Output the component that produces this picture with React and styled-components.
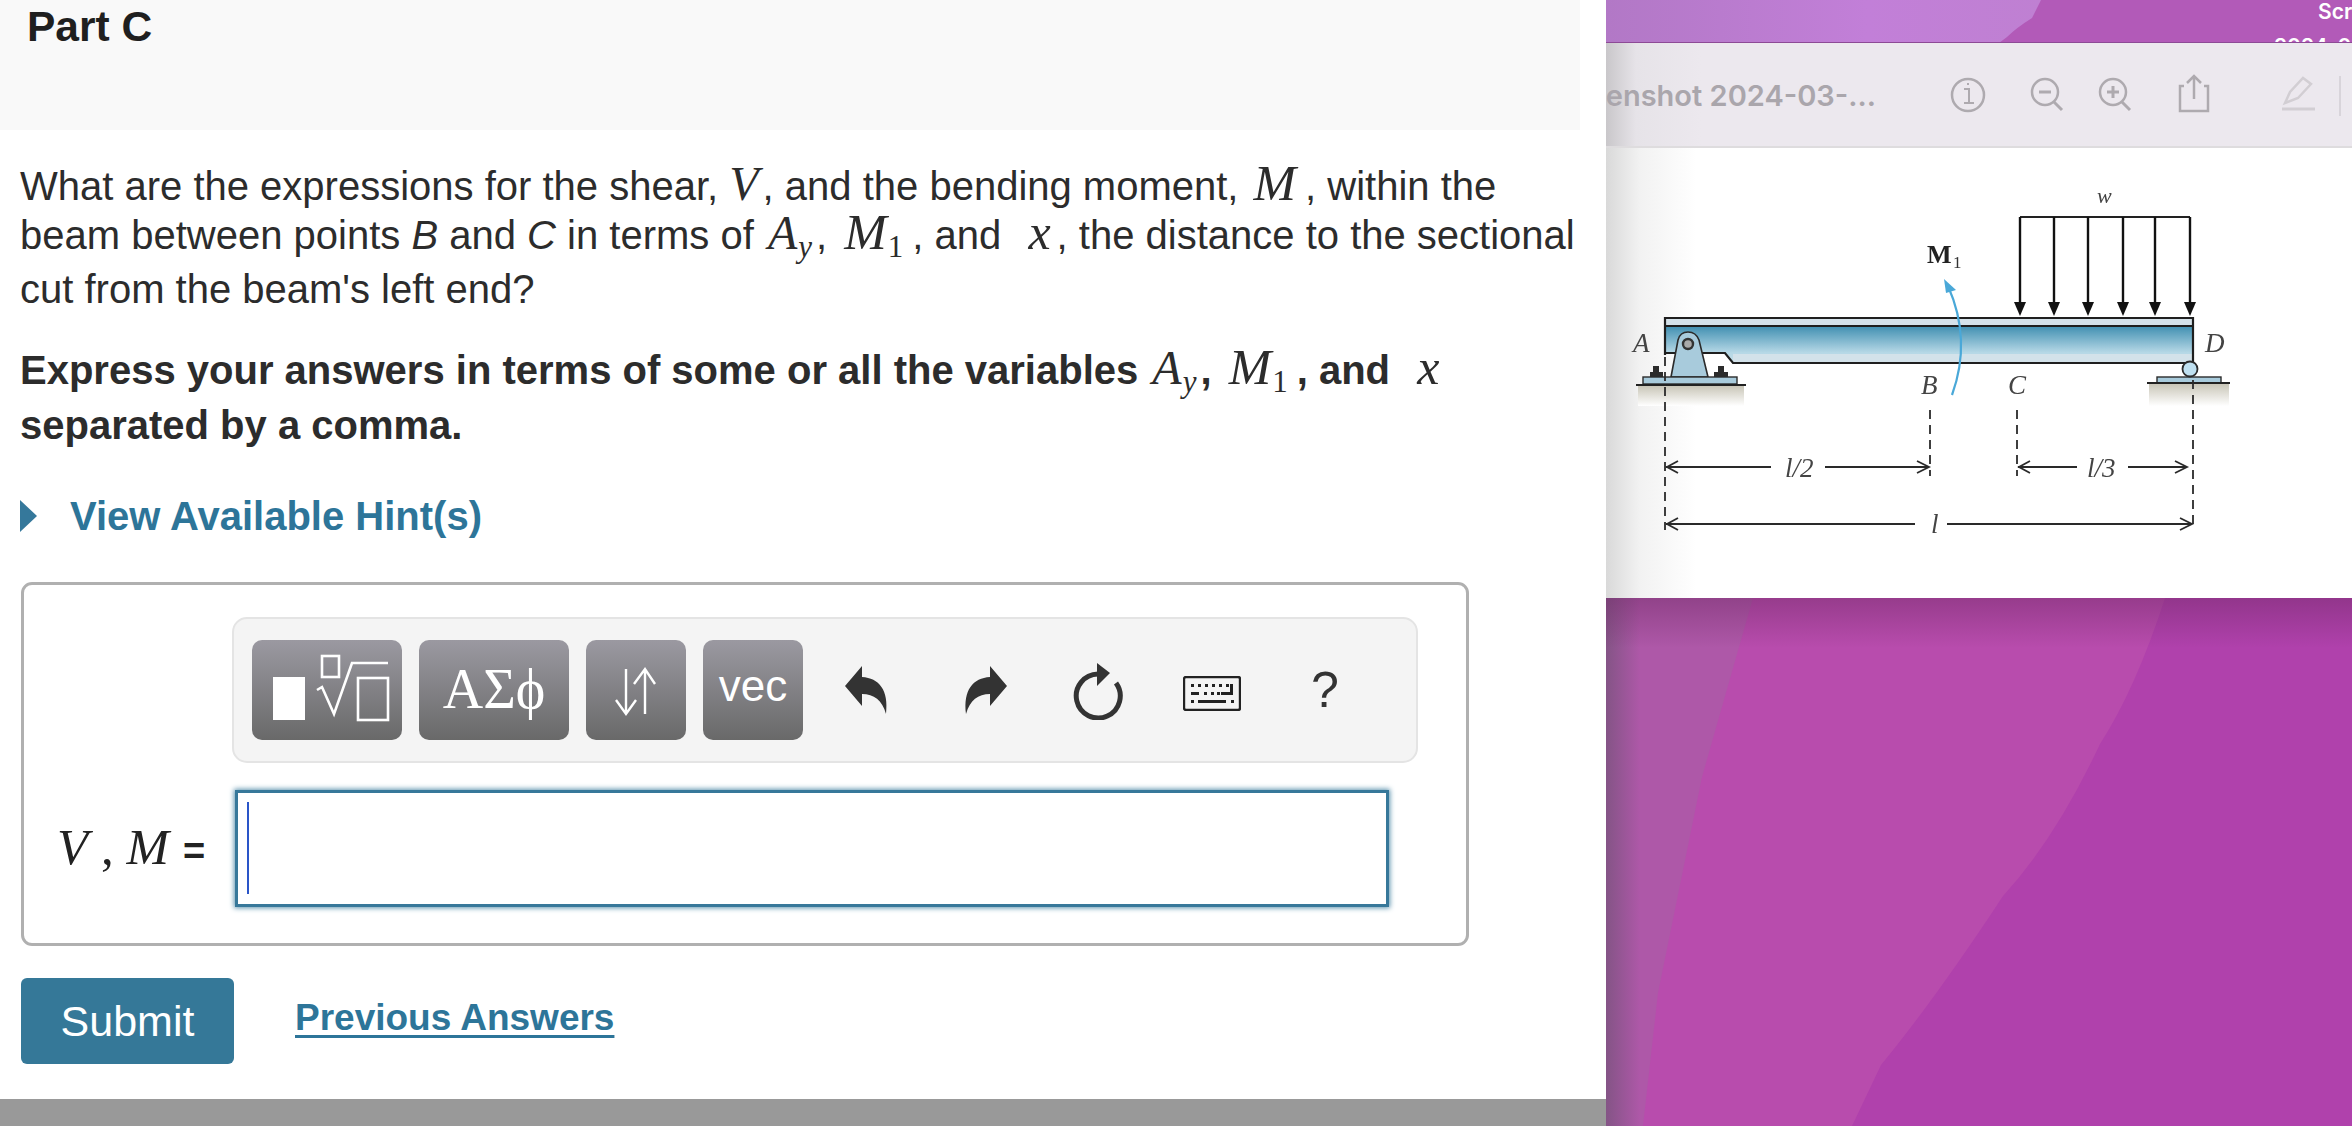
import React from 'react';
import styled, { createGlobalStyle } from 'styled-components';

const GlobalStyle = createGlobalStyle`
  html, body {
    margin: 0;
    padding: 0;
    background: #fff;
    overflow: hidden;
  }
`;

const Page = styled.div`
  display: flex;
  width: 2352px;
  height: 1126px;
  overflow: hidden;
  font-family: "Liberation Sans", Arial, sans-serif;
  color: #2c2c2c;
`;

/* left column: the homework page */
const Question = styled.div`
  width: 1606px;
  height: 1126px;
  display: flex;
  flex-direction: column;
  background: #fff;
`;

const PartHeader = styled.div`
  width: 1580px;
  height: 130px;
  box-sizing: border-box;
  padding: 0 0 0 27px;
  background: #f9f9f9;
`;

const PartTitle = styled.h2`
  margin: 0;
  font-size: 42.5px;
  line-height: 54px;
  font-weight: 700;
  color: #1f1f1f;
`;

const Body = styled.div`
  flex: 1;
  padding: 0 0 0 20px;
`;

const Line = styled.div`
  height: ${(p) => p.$h}px;
  line-height: ${(p) => p.$h}px;
  margin-top: ${(p) => p.$top || 0}px;
  font-size: 40px;
  font-weight: ${(p) => (p.$bold ? 700 : 400)};
  white-space: nowrap;
`;

const Math = styled.span`
  font-family: "Liberation Serif", "Times New Roman", serif;
  font-style: italic;
  font-weight: 400;
  font-size: ${(p) => p.$size || 48}px;
  line-height: 0;
  margin: 0 ${(p) => p.$right ?? 3}px 0 ${(p) => p.$left ?? 3}px;
  letter-spacing: 1px;
  sub {
    font-size: 31px;
    line-height: 0;
    vertical-align: -8px;
  }
  b {
    font-style: normal;
    font-weight: 400;
  }
`;

const Ital = styled.i`
  font-style: italic;
`;

const HintRow = styled.div`
  display: flex;
  align-items: center;
  gap: 33px;
  margin-top: 43px;
  height: 40px;
`;

const HintArrow = styled.span`
  width: 0;
  height: 0;
  border-left: 17px solid #35789b;
  border-top: 16px solid transparent;
  border-bottom: 16px solid transparent;
`;

const HintLink = styled.span`
  font-size: 40px;
  font-weight: 700;
  color: #2d7599;
`;

const AnswerBox = styled.div`
  box-sizing: border-box;
  width: 1448px;
  height: 364px;
  margin: 46px 0 0 1px;
  padding: 32px 0 0 0;
  border: 3px solid #b0b0b0;
  border-radius: 11px;
`;

const Toolbar = styled.div`
  box-sizing: border-box;
  width: 1186px;
  height: 146px;
  margin-left: 208px;
  padding: 21px 0 0 18px;
  display: flex;
  gap: 17px;
  background: #f4f4f4;
  border: 2px solid #e4e4e4;
  border-radius: 15px;
`;

const MathButton = styled.div`
  width: ${(p) => p.$w}px;
  height: 100px;
  flex: none;
  display: flex;
  align-items: center;
  justify-content: center;
  box-sizing: border-box;
  padding-bottom: ${(p) => (p.$serif ? 2 : p.$text ? 8 : 0)}px;
  border-radius: 10px;
  background: linear-gradient(#9b99a1, #696969);
  color: #fff;
  font-family: ${(p) => (p.$serif ? '"Liberation Serif", serif' : '"Liberation Sans", sans-serif')};
  font-size: ${(p) => (p.$serif ? 56 : 44)}px;
  svg {
    display: block;
  }
`;

const Tools = styled.div`
  display: flex;
  align-items: center;
  height: 100px;
  margin-left: 25px;
`;

const ToolSlot = styled.div`
  width: ${(p) => p.$w}px;
  flex: none;
  display: flex;
  align-items: center;
  padding-top: ${(p) => p.$down || 0}px;
  svg {
    display: block;
  }
`;

const Help = styled.span`
  font-size: 50px;
  color: #333;
`;

const InputRow = styled.div`
  display: flex;
  align-items: center;
  margin-top: 27px;
`;

const InputLabel = styled.div`
  width: 211px;
  box-sizing: border-box;
  padding: 0 0 4px 33px;
  font-family: "Liberation Serif", serif;
  font-size: 51px;
  white-space: nowrap;
  color: #222;
  i {
    font-style: italic;
  }
  span {
    font-family: "Liberation Sans", sans-serif;
    font-size: 38px;
    font-weight: 700;
    margin-left: 14px;
  }
`;

const MathInput = styled.div`
  box-sizing: border-box;
  width: 1154px;
  height: 117px;
  padding: 9px 0 0 9px;
  background: #fff;
  border: 3px solid #37789a;
  box-shadow: 0 0 5px 1px #5d93ae;
`;

const Caret = styled.div`
  width: 2px;
  height: 92px;
  background: #2a55c8;
`;

const Actions = styled.div`
  display: flex;
  align-items: center;
  gap: 61px;
  margin-top: 32px;
  margin-left: 1px;
`;

const SubmitButton = styled.div`
  width: 213px;
  height: 86px;
  display: flex;
  align-items: center;
  justify-content: center;
  border-radius: 6px;
  background: #357898;
  color: #fff;
  font-size: 43px;
`;

const PrevLink = styled.span`
  font-size: 37px;
  font-weight: 700;
  color: #2d7599;
  text-decoration: underline;
  text-decoration-thickness: 3px;
  text-underline-offset: 5px;
  position: relative;
  top: -3px;
`;

const BottomBar = styled.div`
  height: 27px;
  background: #999;
`;

/* right column: preview window on the desktop */
const Desktop = styled.div`
  position: relative;
  flex: 1;
  display: flex;
  flex-direction: column;
  overflow: hidden;
`;

const TopWall = styled.div`
  position: relative;
  height: 43px;
  overflow: hidden;
  background: #b25ab8;
  border-bottom: 1px solid #8d4a96;
  box-sizing: border-box;
`;

const WallShape = styled.svg`
  position: absolute;
  left: 0;
  top: 0;
`;

const DesktopLabel = styled.div`
  position: absolute;
  left: ${(p) => p.$x}px;
  top: ${(p) => p.$y}px;
  font-family: "Inter", sans-serif;
  font-size: 21px;
  font-weight: 600;
  color: #fff;
  white-space: nowrap;
`;

const WindowBar = styled.div`
  position: relative;
  height: 105px;
  box-sizing: border-box;
  display: flex;
  align-items: center;
  background: linear-gradient(90deg, #c9c7ca 0, #e6e3e8 30px, #ece8ee 95px);
  border-bottom: 2px solid #dedcde;
  overflow: hidden;
`;

const FileName = styled.div`
  width: 270px;
  flex: none;
  display: flex;
  justify-content: flex-end;
  overflow: hidden;
  font-family: "Inter", sans-serif;
  font-size: 29px;
  font-weight: 600;
  color: #aaa6ac;
  white-space: nowrap;
  margin-top: 2px;
`;

const BarIcons = styled.svg`
  position: absolute;
  left: 0;
  top: 0;
`;

const Preview = styled.div`
  height: 450px;
  background: linear-gradient(90deg, #d9d9d9 0, #f2f2f2 34px, #fff 90px);
  svg {
    display: block;
    filter: blur(0.5px);
  }
`;

const Wall = styled.div`
  position: relative;
  flex: 1;
  background: #b041ac;
`;

const WallShade = styled.div`
  position: absolute;
  inset: 0;
  background:
    linear-gradient(180deg, rgba(110, 40, 100, 0.45) 0, rgba(110, 40, 100, 0) 50px),
    linear-gradient(90deg, rgba(90, 80, 100, 0.5) 0, rgba(90, 80, 100, 0) 34px);
`;

const Dim = ({ x1, x2, y }) => (
  <line x1={x1} x2={x2} y1={y} y2={y} stroke="#2a2a2a" strokeWidth="1.8" />
);

const Diagram = () => (
  <svg width="746" height="450" viewBox="1606 148 746 450" fontFamily="'Liberation Serif', serif">
    <defs>
      <linearGradient id="web" x1="0" y1="0" x2="0" y2="1">
        <stop offset="0" stopColor="#408fb1" />
        <stop offset="0.72" stopColor="#b6d8e6" />
        <stop offset="1" stopColor="#c3dde8" />
      </linearGradient>
      <linearGradient id="ground" x1="0" y1="0" x2="0" y2="1">
        <stop offset="0" stopColor="#c9c6b8" />
        <stop offset="1" stopColor="#ffffff" />
      </linearGradient>
    </defs>

    {/* ground shades */}
    <rect x="1638" y="386" width="106" height="20" fill="url(#ground)" />
    <rect x="2149" y="384" width="80" height="22" fill="url(#ground)" />

    {/* beam */}
    <path d="M1665 326H2193V363H1733L1725 353H1665Z" fill="url(#web)" />
    <rect x="1665" y="318" width="528" height="8" fill="#d5e2ea" />
    <rect x="1733" y="354" width="460" height="9" fill="#d3e2ea" />
    <path
      d="M1665 355V318H2193V363H1733L1725 353H1665M1665 326H2193"
      fill="none"
      stroke="#1f1f1f"
      strokeWidth="2.2"
    />

    {/* pin support at A */}
    <path d="M1671 377L1678 340Q1680 332 1688 332Q1696 332 1699 340L1708 377Z" fill="#a8cbdc" stroke="#2b2b2b" strokeWidth="1.6" />
    <circle cx="1688" cy="344" r="5" fill="#a9a9a9" stroke="#333" strokeWidth="2.4" />
    <rect x="1643" y="377" width="94" height="7" fill="#a8cbdc" stroke="#2b2b2b" strokeWidth="1.4" />
    <path d="M1650 377V372H1653V366H1659V372H1663V377Z" fill="#2b2b2b" />
    <path d="M1714 377V372H1718V366H1724V372H1728V377Z" fill="#2b2b2b" />
    <line x1="1636" x2="1746" y1="385" y2="385" stroke="#222" strokeWidth="1.8" />

    {/* roller at D */}
    <rect x="2157" y="377" width="64" height="6" fill="#a8cbdc" stroke="#2b2b2b" strokeWidth="1.4" />
    <circle cx="2190" cy="369" r="7.5" fill="#bfe0f0" stroke="#2b2b2b" strokeWidth="1.8" />
    <line x1="2147" x2="2230" y1="383" y2="383" stroke="#222" strokeWidth="1.8" />

    {/* distributed load */}
    <line x1="2020" x2="2190" y1="217" y2="217" stroke="#222" strokeWidth="1.8" />
    {[2020, 2054, 2088, 2123, 2155, 2190].map((x) => (
      <g key={x}>
        <line x1={x} x2={x} y1="217" y2="308" stroke="#111" strokeWidth="2.4" />
        <path d={`M${x - 6} 302L${x} 316L${x + 6} 302Z`} fill="#111" />
      </g>
    ))}

    {/* moment arrow */}
    <path d="M1952 395Q1972 340 1948 286" fill="none" stroke="#4aa8d8" strokeWidth="2.2" />
    <path d="M1944 279L1956 290L1946 293Z" fill="#4aa8d8" />

    {/* witness lines */}
    <g stroke="#2a2a2a" strokeWidth="1.8" strokeDasharray="9 6" fill="none">
      <line x1="1665" x2="1665" y1="357" y2="530" />
      <line x1="1930" x2="1930" y1="410" y2="476" />
      <line x1="2017" x2="2017" y1="410" y2="476" />
      <line x1="2193" x2="2193" y1="380" y2="530" />
    </g>

    {/* dimensions */}
    <Dim x1={1666} x2={1771} y={467} />
    <Dim x1={1825} x2={1929} y={467} />
    <Dim x1={2018} x2={2077} y={467} />
    <Dim x1={2128} x2={2187} y={467} />
    <Dim x1={1666} x2={1915} y={524} />
    <Dim x1={1947} x2={2192} y={524} />
    <g stroke="#2a2a2a" strokeWidth="1.8" fill="none">
      <path d="M1678 461L1667 467L1678 473" />
      <path d="M1917 461L1929 467L1917 473" />
      <path d="M2030 461L2019 467L2030 473" />
      <path d="M2175 461L2187 467L2175 473" />
      <path d="M1678 518L1667 524L1678 530" />
      <path d="M2180 518L2192 524L2180 530" />
    </g>

    {/* labels */}
    <g fill="#444" fontStyle="italic" fontSize="27">
      <text x="1633" y="352">A</text>
      <text x="1921" y="394">B</text>
      <text x="2008" y="394">C</text>
      <text x="2205" y="352">D</text>
      <text x="2097" y="203" fontSize="22">w</text>
      <text x="1785" y="477">l/2</text>
      <text x="2087" y="477">l/3</text>
      <text x="1931" y="533">l</text>
    </g>
    <text x="1927" y="263" fontSize="26" fontWeight="700" fill="#222">M</text>
    <text x="1953" y="268" fontSize="17" fill="#333">1</text>
  </svg>
);

const App = () => (
  <>
    <GlobalStyle />
    <Page>
      <Question>
        <PartHeader>
          <PartTitle>Part C</PartTitle>
        </PartHeader>
        <Body>
          <Line $h={49} $top={31.5}>
            What are the expressions for the shear, <Math $left={0}>V</Math>, and the bending moment,{' '}
            <Math $size={51} $left={4} $right={8}>M</Math>, within the
          </Line>
          <Line $h={49}>
            beam between points <Ital>B</Ital> and <Ital>C</Ital> in terms of <Math>A<sub>y</sub></Math>,{' '}
            <Math $size={51} $left={6} $right={8}>M<b><sub>1</sub></b></Math>, and &nbsp;
            <Math $size={50} $left={5} $right={5}>x</Math>, the distance to the sectional
          </Line>
          <Line $h={59}>cut from the beam's left end?</Line>
          <Line $bold $h={56} $top={23.5}>
            Express your answers in terms of some or all the variables <Math>A<sub>y</sub></Math>,{' '}
            <Math $size={51} $left={6} $right={8}>M<b><sub>1</sub></b></Math>, and &nbsp;
            <Math $size={50} $left={5} $right={5}>x</Math>
          </Line>
          <Line $bold $h={55}>separated by a comma.</Line>
          <HintRow>
            <HintArrow />
            <HintLink>View Available Hint(s)</HintLink>
          </HintRow>
          <AnswerBox>
            <Toolbar>
              <MathButton $w={150}>
                <svg width="150" height="100" viewBox="0 0 150 100" fill="none" stroke="#fff" strokeWidth="2.6">
                  <rect x="21" y="37" width="32" height="43" fill="#fff" stroke="none" />
                  <rect x="70" y="16" width="17" height="21" />
                  <path d="M65 50L70 47L82 74L100 23H136" />
                  <rect x="106" y="38" width="30" height="42" />
                </svg>
              </MathButton>
              <MathButton $w={150} $serif>ΑΣϕ</MathButton>
              <MathButton $w={100}>
                <svg width="100" height="100" viewBox="0 0 100 100" fill="none" stroke="#fff" strokeWidth="2.4">
                  <path d="M40 29V73M30 60L40 74L50 60" />
                  <path d="M59 74V30M48 44L59 29L69 44" />
                </svg>
              </MathButton>
              <MathButton $w={100} $text>vec</MathButton>
              <Tools>
                <ToolSlot $w={118} $down={2}>
                  <svg width="44" height="50" viewBox="0 0 44 50" fill="#333">
                    <path d="M0 20L17 0V11C34 12 44 24 41 48C37 34 29 28 17 28V40Z" />
                  </svg>
                </ToolSlot>
                <ToolSlot $w={110} $down={2}>
                  <svg width="44" height="50" viewBox="0 0 44 50" fill="#333">
                    <path d="M44 20L27 0V11C10 12 0 24 3 48C7 34 15 28 27 28V40Z" />
                  </svg>
                </ToolSlot>
                <ToolSlot $w={110} $down={2}>
                  <svg width="52" height="58" viewBox="0 0 52 58" fill="none" stroke="#333" strokeWidth="5">
                    <path d="M43 21A22 22 0 1 1 25 12" />
                    <path d="M24 1L37 11L24 24Z" fill="#333" stroke="none" />
                  </svg>
                </ToolSlot>
                <ToolSlot $w={128} $down={6}>
                  <svg width="58" height="35" viewBox="0 0 58 35" fill="none" stroke="#222">
                    <rect x="1" y="1" width="56" height="33" rx="2" strokeWidth="2.4" />
                    <g fill="#222" stroke="none">
                      {[8, 15, 22, 29, 36, 43].map((x) => (
                        <rect key={x} x={x} y="8" width="3" height="3" />
                      ))}
                      <rect x="8" y="16" width="8" height="3" />
                      {[21, 28, 34].map((x) => (
                        <rect key={x} x={x} y="16" width="3" height="3" />
                      ))}
                      <path d="M47 8H50V19H38V16H47Z" />
                      <rect x="8" y="24" width="3" height="3" />
                      <rect x="15" y="24" width="28" height="3" />
                      <rect x="48" y="24" width="3" height="3" />
                    </g>
                  </svg>
                </ToolSlot>
                <ToolSlot $w={40}>
                  <Help>?</Help>
                </ToolSlot>
              </Tools>
            </Toolbar>
            <InputRow>
              <InputLabel>
                <i>V</i> , <i>M</i><span>=</span>
              </InputLabel>
              <MathInput>
                <Caret />
              </MathInput>
            </InputRow>
          </AnswerBox>
          <Actions>
            <SubmitButton>Submit</SubmitButton>
            <PrevLink>Previous Answers</PrevLink>
          </Actions>
        </Body>
        <BottomBar />
      </Question>
      <Desktop>
        <TopWall>
          <WallShape width="746" height="43" viewBox="0 0 746 43">
            <defs>
              <linearGradient id="topLight" x1="0" y1="0" x2="1" y2="0">
                <stop offset="0" stopColor="#b278c6" />
                <stop offset="0.6" stopColor="#c27fd8" />
                <stop offset="1" stopColor="#bf80d2" />
              </linearGradient>
            </defs>
            <path d="M0 0H435L426 18Q410 28 401 37L393 43H0Z" fill="url(#topLight)" />
          </WallShape>
          <DesktopLabel $x={712} $y={-1}>Scr</DesktopLabel>
          <DesktopLabel $x={668} $y={34}>2024-0</DesktopLabel>
        </TopWall>
        <WindowBar>
          <FileName>enshot 2024-03-...</FileName>
          <BarIcons width="746" height="105" viewBox="1606 43 746 105" fill="none" stroke="#aeaaaf" strokeWidth="2.5">
            <circle cx="1968" cy="95" r="16" />
            <path d="M1964 89H1969V103M1964 103H1974M1968 83V85" strokeWidth="2" />
            <circle cx="2045" cy="92" r="13" />
            <path d="M2039 92H2051M2054 102L2062 110" strokeWidth="3" />
            <circle cx="2113" cy="92" r="13" />
            <path d="M2107 92H2119M2113 86V98M2122 102L2130 110" strokeWidth="3" />
            <path d="M2184 86H2180V111H2208V86H2204M2194 77V99M2187 83L2194 76L2201 83" />
            <g stroke="#d2ced3">
              <path d="M2285 103L2290 92L2303 78L2311 84L2298 98Z" />
              <path d="M2282 109H2315" strokeWidth="3" />
              <path d="M2340 76V116" strokeWidth="1.5" />
            </g>
          </BarIcons>
        </WindowBar>
        <Preview>
          <Diagram />
        </Preview>
        <Wall>
          <WallShape width="746" height="528" viewBox="0 0 746 528">
            <path d="M0 0H559Q530 90 494 146Q450 240 397 298Q330 400 275 467L246 528H0Z" fill="#b84cad" />
            <path d="M0 0H147L96 179L52 395L37 528H0Z" fill="#ae58a8" />
          </WallShape>
          <WallShade />
        </Wall>
      </Desktop>
    </Page>
  </>
);

export default App;
